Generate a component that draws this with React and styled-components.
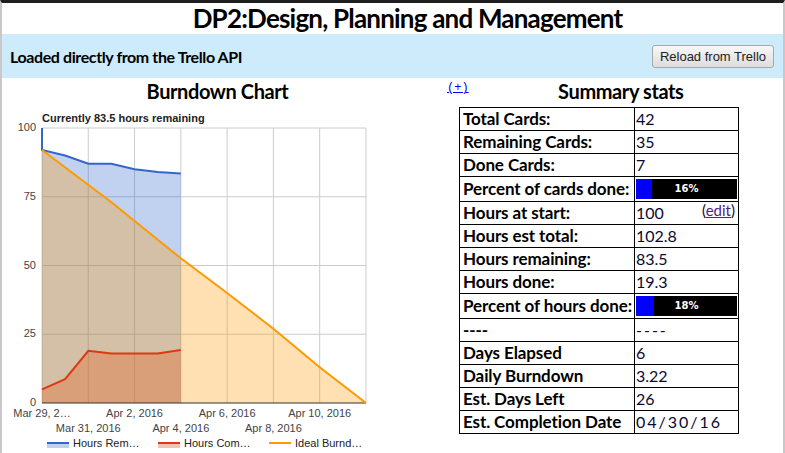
import React from 'react';
import styled, { createGlobalStyle } from 'styled-components';

const SANS = 'Lato, "Liberation Sans", sans-serif';
const ARIAL = '"Liberation Sans", Arial, sans-serif';

const GlobalStyle = createGlobalStyle`
  html, body {
    margin: 0;
    padding: 0;
    background: #fff;
  }
  body {
    font-family: ${SANS};
    color: #000;
  }
`;

const Page = styled.div`
  width: 781px;
  height: 450px;
  border-top: 3px solid #1e1e1e;
  border-left: 2px solid #c8c8c8;
  border-right: 2px solid #c8c8c8;
  overflow: hidden;
`;

const Title = styled.h1`
  margin: 0;
  padding-left: 30px;
  height: 31px;
  line-height: 31px;
  text-align: center;
  font-size: 26px;
  letter-spacing: -0.8px;
  font-weight: bold;
`;

const InfoBar = styled.div`
  height: 44px;
  background: #cdebfb;
  display: flex;
  align-items: center;
  justify-content: space-between;
  padding: 0 9px 0 8px;

  h2 {
    margin: 0;
    font-size: 16px;
    letter-spacing: -0.4px;
    font-weight: bold;
  }
`;

const ReloadButton = styled.button`
  width: 122px;
  height: 23px;
  font-family: ${ARIAL};
  font-size: 13px;
  color: #222;
  background: linear-gradient(#f7f7f7, #dddddd);
  border: 1px solid #a9a9a9;
  border-radius: 3px;
  padding: 0;
`;

const Main = styled.div`
  display: grid;
  grid-template-columns: 431px 1fr;
  column-gap: 12px;
`;

const ChartColumn = styled.div`
  display: flex;
  flex-direction: column;
`;

const Heading = styled.h3`
  margin: 2px 0 0;
  height: 23px;
  line-height: 22px;
  font-size: 20px;
  letter-spacing: -0.4px;
  font-weight: bold;
  text-align: center;
`;

const StatsColumn = styled.div`
  padding-left: 2px;
`;

const StatsHead = styled.div`
  display: flex;
  align-items: flex-start;
  height: 29px;

  a {
    font-family: "Liberation Mono", monospace;
    font-size: 12px;
    color: #0000ee;
    margin-top: 3px;
  }

  ${Heading} {
    flex: 1;
    padding-right: 10px;
  }
`;

const StatsTable = styled.table`
  margin-left: 12px;
  border-collapse: collapse;
  table-layout: fixed;
  width: 279px;
`;

const Row = styled.tr`
  height: ${p => (p.$tall ? 25 : 23)}px;
`;

const Label = styled.td`
  border: 1px solid #000;
  padding: 0 3px;
  font-size: 17px;
  letter-spacing: -0.1px;
  font-weight: bold;
  white-space: nowrap;
  line-height: 20px;
`;

const Value = styled.td`
  border: 1px solid #000;
  padding: 0 1px;
  font-size: 16px;
  color: #0a0a30;
  line-height: 20px;
  white-space: nowrap;
  letter-spacing: ${p => (p.$spaced ? '2px' : '0')};
`;

const EditLink = styled.span`
  float: right;
  font-size: 15px;
  margin-top: -3px;
  margin-right: 2px;
  letter-spacing: 0;

  a {
    color: #551a8b;
  }
`;

const Progress = styled.div`
  position: relative;
  height: 20px;
  background: #000;
  color: #fff;
  font-family: "DejaVu Sans", sans-serif;
  font-size: 10px;
  font-weight: bold;
  text-align: center;
  line-height: 20px;
`;

const ProgressFill = styled.div`
  position: absolute;
  left: 0;
  top: 0;
  bottom: 0;
  background: #0000ff;
`;

const ProgressText = styled.span`
  position: relative;
`;

const PercentBar = ({ pct }) => (
  <Progress>
    <ProgressFill style={{ width: `${pct}%` }} />
    <ProgressText>{pct}%</ProgressText>
  </Progress>
);

const BLUE = '#3366cc';
const RED = '#dc3912';
const ORANGE = '#ff9900';

const X0 = 40;
const DAY = 23.14;
const BASE = 299;
const UNIT = 2.75;
const x = d => X0 + d * DAY;
const y = v => BASE - v * UNIT;

const remaining = [[0, 100], [0, 92], [1, 90], [2, 87], [3, 87], [4, 85], [5, 84], [6, 83.5]];
const completed = [[0, 5], [1, 8.7], [2, 19], [3, 18], [4, 18], [5, 18], [6, 19.3]];
const ideal = [[0, 92], [3, 73], [6, 52.6], [8, 40], [10, 27], [12, 13], [14, 0]];

const linePts = pts => pts.map(([d, v]) => `${x(d).toFixed(1)},${y(v).toFixed(1)}`).join(' ');
const areaPts = pts =>
  `${x(pts[0][0])},${y(0)} ${linePts(pts)} ${x(pts[pts.length - 1][0])},${y(0)}`;

const series = [
  { pts: remaining, color: BLUE },
  { pts: completed, color: RED },
  { pts: ideal, color: ORANGE },
];

const xLabels = [
  { d: 0, text: 'Mar 29, 2…', row: 0 },
  { d: 2, text: 'Mar 31, 2016', row: 1 },
  { d: 4, text: 'Apr 2, 2016', row: 0 },
  { d: 6, text: 'Apr 4, 2016', row: 1 },
  { d: 8, text: 'Apr 6, 2016', row: 0 },
  { d: 10, text: 'Apr 8, 2016', row: 1 },
  { d: 12, text: 'Apr 10, 2016', row: 0 },
];

const legend = [
  { x: 45, color: BLUE, label: 'Hours Rem…', fill: true },
  { x: 156, color: RED, label: 'Hours Com…', fill: true },
  { x: 267, color: ORANGE, label: 'Ideal Burnd…', fill: false },
];

const ChartSvg = styled.svg`
  display: block;
  margin-top: 1px;
  font-family: ${ARIAL};
`;

const BurndownChart = () => (
  <ChartSvg width="431" height="350" viewBox="0 0 431 350">
    <text x={X0} y="18" fontSize="11" fontWeight="bold" fill="#222">
      Currently 83.5 hours remaining
    </text>

    {[0, 2, 4, 6, 8, 10, 12, 14].map(d => (
      <line key={d} x1={x(d)} x2={x(d)} y1={y(100)} y2={y(0)} stroke="#cccccc" />
    ))}
    {[25, 50, 75, 100].map(v => (
      <line key={v} x1={X0} x2={x(14)} y1={y(v)} y2={y(v)} stroke="#cccccc" />
    ))}

    {series.map(s => (
      <polygon key={s.color} points={areaPts(s.pts)} fill={s.color} fillOpacity="0.3" />
    ))}

    <line x1={X0} x2={x(14)} y1={y(0)} y2={y(0)} stroke="#333" />

    {series.map(s => (
      <polyline key={s.color} points={linePts(s.pts)} fill="none" stroke={s.color} strokeWidth="2" />
    ))}

    {[0, 25, 50, 75, 100].map(v => (
      <text key={v} x="34" y={y(v) + 3} fontSize="11" fill="#444" textAnchor="end">
        {v}
      </text>
    ))}

    {xLabels.map(l => (
      <text
        key={l.d}
        x={x(l.d)}
        y={l.row ? 328 : 313}
        fontSize="11"
        fill="#444"
        textAnchor="middle"
      >
        {l.text}
      </text>
    ))}

    {legend.map(l => (
      <g key={l.label}>
        {l.fill && <rect x={l.x} y="339" width="22" height="5" fill={l.color} fillOpacity="0.3" />}
        <line x1={l.x} x2={l.x + 22} y1="339" y2="339" stroke={l.color} strokeWidth="2" />
        <text x={l.x + 26} y="343" fontSize="11" fill="#222">
          {l.label}
        </text>
      </g>
    ))}
  </ChartSvg>
);

const stats = [
  { label: 'Total Cards:', value: '42' },
  { label: 'Remaining Cards:', value: '35' },
  { label: 'Done Cards:', value: '7' },
  { label: 'Percent of cards done:', pct: 16 },
  { label: 'Hours at start:', value: '100', edit: true },
  { label: 'Hours est total:', value: '102.8' },
  { label: 'Hours remaining:', value: '83.5' },
  { label: 'Hours done:', value: '19.3' },
  { label: 'Percent of hours done:', pct: 18 },
  { label: '----', value: '----', spaced: true },
  { label: 'Days Elapsed', value: '6' },
  { label: 'Daily Burndown', value: '3.22' },
  { label: 'Est. Days Left', value: '26' },
  { label: 'Est. Completion Date', value: '04/30/16', spaced: true },
];

const App = () => (
  <>
    <GlobalStyle />
    <Page>
      <Title>DP2:Design, Planning and Management</Title>
      <InfoBar>
        <h2>Loaded directly from the Trello API</h2>
        <ReloadButton>Reload from Trello</ReloadButton>
      </InfoBar>
      <Main>
        <ChartColumn>
          <Heading>Burndown Chart</Heading>
          <BurndownChart />
        </ChartColumn>
        <StatsColumn>
          <StatsHead>
            <a href="#expand">(+)</a>
            <Heading>Summary stats</Heading>
          </StatsHead>
          <StatsTable>
            <colgroup>
              <col style={{ width: 175 }} />
              <col style={{ width: 104 }} />
            </colgroup>
            <tbody>
              {stats.map(s => (
                <Row key={s.label} $tall={s.pct != null}>
                  <Label>{s.label}</Label>
                  <Value $spaced={s.spaced}>
                    {s.pct != null ? (
                      <PercentBar pct={s.pct} />
                    ) : (
                      <>
                        {s.value}
                        {s.edit && (
                          <EditLink>
                            (<a href="#edit">edit</a>)
                          </EditLink>
                        )}
                      </>
                    )}
                  </Value>
                </Row>
              ))}
            </tbody>
          </StatsTable>
        </StatsColumn>
      </Main>
    </Page>
  </>
);

export default App;
